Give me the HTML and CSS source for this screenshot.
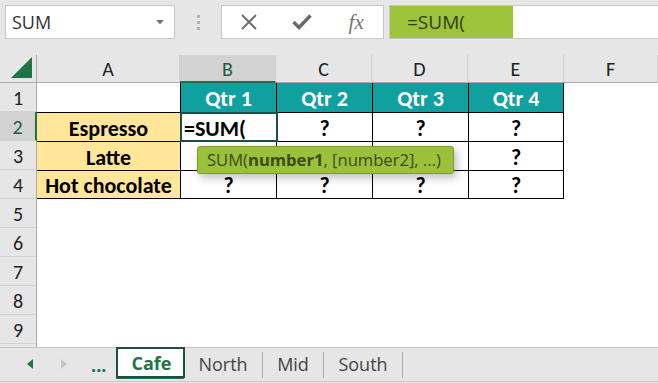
FILE: index.html
```html
<!DOCTYPE html>
<html>
<head>
<meta charset="utf-8">
<link rel="stylesheet" href="styles.css">
</head>
<body>
<div class="toolbar">
  <div class="namebox"><span>SUM</span><svg class="caret" viewBox="0 0 8 5"><path d="M0 0H8L4 4.5Z" fill="#777"/></svg></div>
  <div class="grip"><i></i><i></i><i></i></div>
  <div class="fbtns">
    <svg class="ico" width="18" height="16" viewBox="0 0 18 16"><path d="M2 1L16 15M16 1L2 15" stroke="#6e6e6e" stroke-width="2" fill="none"/></svg>
    <svg class="ico" width="20" height="16" viewBox="0 0 20 16"><path d="M1.5 8L7 13.5L18.5 1.5" stroke="#6a6a6a" stroke-width="3.4" fill="none"/></svg>
    <span class="fx">fx</span>
  </div>
  <div class="finput"><span class="fsel">=SUM(</span></div>
</div>

<div class="sheet">
  <div class="ch corner"><svg width="22" height="22" viewBox="0 0 22 22"><path d="M0 21L21 0V21Z" fill="#217346"/></svg></div>
  <div class="ch">A</div>
  <div class="ch sel">B</div>
  <div class="ch">C</div>
  <div class="ch">D</div>
  <div class="ch">E</div>
  <div class="ch">F</div>

  <div class="rh">1</div>
  <div class="c"></div>
  <div class="c t q">Qtr 1</div>
  <div class="c t q">Qtr 2</div>
  <div class="c t q">Qtr 3</div>
  <div class="c t q r">Qtr 4</div>
  <div class="c"></div>

  <div class="rh sel">2</div>
  <div class="c t a">Espresso</div>
  <div class="c t active">=SUM(
    <div class="tip">SUM(<b>number1</b>, [number2], ...)</div>
  </div>
  <div class="c t">?</div>
  <div class="c t">?</div>
  <div class="c t r">?</div>
  <div class="c"></div>

  <div class="rh">3</div>
  <div class="c t a">Latte</div>
  <div class="c t"></div>
  <div class="c t"></div>
  <div class="c t"></div>
  <div class="c t r">?</div>
  <div class="c"></div>

  <div class="rh">4</div>
  <div class="c t a b">Hot chocolate</div>
  <div class="c t b">?</div>
  <div class="c t b">?</div>
  <div class="c t b">?</div>
  <div class="c t r b">?</div>
  <div class="c"></div>

  <div class="rh">5</div><div class="blank"></div>
  <div class="rh">6</div><div class="blank"></div>
  <div class="rh">7</div><div class="blank"></div>
  <div class="rh">8</div><div class="blank"></div>
  <div class="rh">9</div><div class="blank"></div>
  <div class="rh"></div><div class="blank"></div>
</div>

<div class="tabs">
  <div class="nav">
    <svg class="larr" width="6" height="10" viewBox="0 0 6 10"><path d="M6 0V10L0 5Z" fill="#217346"/></svg>
    <svg class="rarr" width="6" height="10" viewBox="0 0 6 10"><path d="M0 0V10L6 5Z" fill="#c4c4c4"/></svg>
    <span class="more">...</span>
  </div>
  <div class="tab active">Cafe</div>
  <div class="tab w79">North</div>
  <div class="tab w61">Mid</div>
  <div class="tab w79">South</div>
</div>
</body>
</html>
```

FILE: styles.css
```css
* { box-sizing: border-box; margin: 0; padding: 0; }
body {
  width: 658px;
  height: 383px;
  overflow: hidden;
  background: #e6e6e6;
  font-family: "Open Sans", "Noto Sans", sans-serif;
}

/* formula bar */
.toolbar {
  height: 55px;
  display: flex;
  align-items: flex-start;
  padding: 5px 0 0 5px;
}
.namebox {
  width: 170px;
  height: 34px;
  background: #fff;
  border: 1px solid #c6c6c6;
  display: flex;
  align-items: center;
  justify-content: space-between;
  padding: 0 10px 0 6px;
  font-size: 18px;
  color: #333;
}
.caret { width: 8px; height: 5px; }
.grip {
  width: 46px;
  height: 34px;
  display: flex;
  flex-direction: column;
  align-items: center;
  justify-content: center;
  gap: 3px;
}
.grip i { display: block; width: 3px; height: 3px; background: #b3b3b3; }
.fbtns {
  width: 163px;
  height: 34px;
  background: #fff;
  border: 1px solid #c6c6c6;
  display: grid;
  grid-template-columns: repeat(3, 1fr);
  align-items: center;
  justify-items: center;
}
.fx {
  font-family: "Liberation Serif", serif;
  font-style: italic;
  font-size: 21px;
  color: #767676;
  line-height: 1;
}
.finput {
  flex: 1;
  height: 34px;
  margin-left: 5px;
  background: #fff;
  border: 1px solid #c6c6c6;
  border-right: none;
  display: flex;
}
.fsel {
  width: 123px;
  background: #9dc33b;
  padding-left: 17px;
  font-size: 19px;
  line-height: 32px;
  color: #2f3d12;
}

/* sheet grid */
.sheet {
  height: 292px;
  overflow: hidden;
  display: grid;
  grid-template-columns: 37px 143px 96px 96px 96px 96px 1fr;
  grid-template-rows: 28px repeat(10, 29px);
  background: #fff;
  font-family: Carlito, Lato, sans-serif;
}
.ch {
  background: #e6e6e6;
  border-right: 1px solid #d0d0d0;
  border-bottom: 1px solid #ababab;
  display: flex;
  align-items: center;
  justify-content: center;
  font-size: 20px;
  color: #222;
  padding-top: 1px;
}
.ch.sel {
  background: #d2d2d2;
  border-bottom: 2px solid #217346;
  color: #1f5c3d;
  padding-top: 2px;
}
.corner {
  align-items: flex-end;
  justify-content: flex-end;
  padding: 0 3px 3px 0;
  border-right: 1px solid #ababab;
}
.rh {
  background: #e6e6e6;
  border-right: 1px solid #ababab;
  border-bottom: 1px solid #d0d0d0;
  display: flex;
  align-items: center;
  justify-content: center;
  font-size: 20px;
  color: #222;
  padding-top: 1px;
}
.rh.sel {
  background: #d2d2d2;
  border-right: 2px solid #217346;
  color: #1f5c3d;
}
.blank { grid-column: 2 / -1; }
.c {
  display: flex;
  align-items: center;
  justify-content: center;
  font-weight: 700;
  font-size: 22px;
  color: #000;
  padding-top: 2px;
}
.t { border-top: 1px solid #000; border-left: 1px solid #000; }
.a { background: #ffe699; border-left: none; }
.q { background: #10a0a0; color: #fff; border-top: none; }
.r { border-right: 1px solid #000; }
.b { border-bottom: 1px solid #000; }
.active {
  position: relative;
  justify-content: flex-start;
  padding-left: 3px;
}
.active::after {
  content: "";
  position: absolute;
  top: -1px;
  left: -1px;
  right: -2px;
  bottom: -1px;
  border: 2px solid #1e4d45;
}
.tip {
  position: absolute;
  left: 16px;
  top: 33px;
  width: 257px;
  height: 28px;
  z-index: 5;
  background: #9bc13a;
  border: 1px solid #7c9d2b;
  border-radius: 3px;
  box-shadow: 3px 4px 8px rgba(0, 0, 0, 0.25);
  font-family: "Open Sans", sans-serif;
  font-weight: 400;
  font-size: 16.6px;
  line-height: 26px;
  color: #3a4a1a;
  padding-left: 9px;
  white-space: nowrap;
}
.tip b { font-weight: 700; }

/* sheet tabs */
.tabs {
  height: 35px;
  border-top: 1px solid #c6c6c6;
  border-bottom: 1px solid #c6c6c6;
  display: flex;
  align-items: flex-start;
}
.nav {
  width: 116px;
  height: 31px;
  display: flex;
  align-items: center;
}
.larr { margin-left: 27px; }
.rarr { margin-left: 28px; }
.more {
  margin-left: 24px;
  font-weight: 700;
  font-size: 18px;
  color: #217346;
  padding-top: 2px;
}
.tab {
  margin-top: 4px;
  height: 26px;
  border-right: 1px solid #ababab;
  display: flex;
  align-items: center;
  justify-content: center;
  font-size: 18px;
  color: #444;
  padding-bottom: 2px;
}
.tab.active {
  margin-top: 0;
  width: 68px;
  height: 31px;
  background: #fff;
  border-left: 1px solid #ababab;
  border-right: 1px solid #ababab;
  border-bottom: 2px solid #217346;
  color: #217346;
  font-weight: 700;
  padding-bottom: 0;
}
.w79 { width: 79px; }
.w61 { width: 61px; }
```
